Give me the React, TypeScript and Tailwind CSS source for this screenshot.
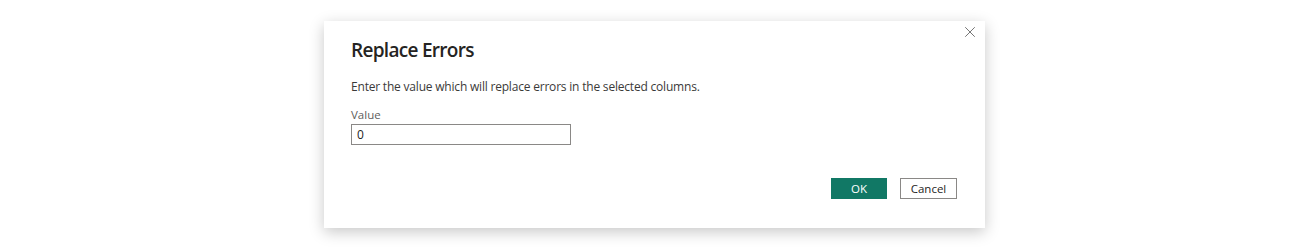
import { X } from 'lucide-react';

export default function App() {
  return (
    <main
      className="w-[1310px] h-[252px] bg-white pt-[21px]"
      style={{ fontFamily: '"Open Sans", "Noto Sans", sans-serif' }}
    >
      {/* Dialog */}
      <div className="relative ml-[324px] w-[661px] h-[207px] bg-white shadow-[0_4px_14px_rgba(0,0,0,0.22)] px-[27px] pt-[16px]">
        <button className="absolute right-[4px] top-[0px] w-[22px] h-[22px] flex items-center justify-center text-[#666]">
          <X size={18} strokeWidth={1.2} />
        </button>

        <h1 className="text-[19px] leading-[26px] font-semibold text-[#252423] tracking-[-0.7px]">Replace Errors</h1>

        <p className="mt-[16px] text-[12px] leading-[16px] text-[#3b3a39] tracking-[-0.2px]">
          Enter the value which will replace errors in the selected columns.
        </p>

        <label className="block mt-[12px] text-[11.5px] leading-[15px] text-[#605e5c]">Value</label>
        <div className="mt-[2px] w-[220px] h-[21px] border border-[#8a8886] flex items-center px-[5px] text-[12px] text-[#252423]">
          0
        </div>

        <div className="flex justify-end gap-[13px] mt-[33px] pr-[1px]">
          <button className="w-[56px] h-[21px] bg-[#117865] text-white text-[11.5px] leading-none">OK</button>
          <button className="w-[57px] h-[21px] border border-[#8a8886] bg-white text-[#252423] text-[11.5px] leading-none">
            Cancel
          </button>
        </div>
      </div>
    </main>
  );
}
